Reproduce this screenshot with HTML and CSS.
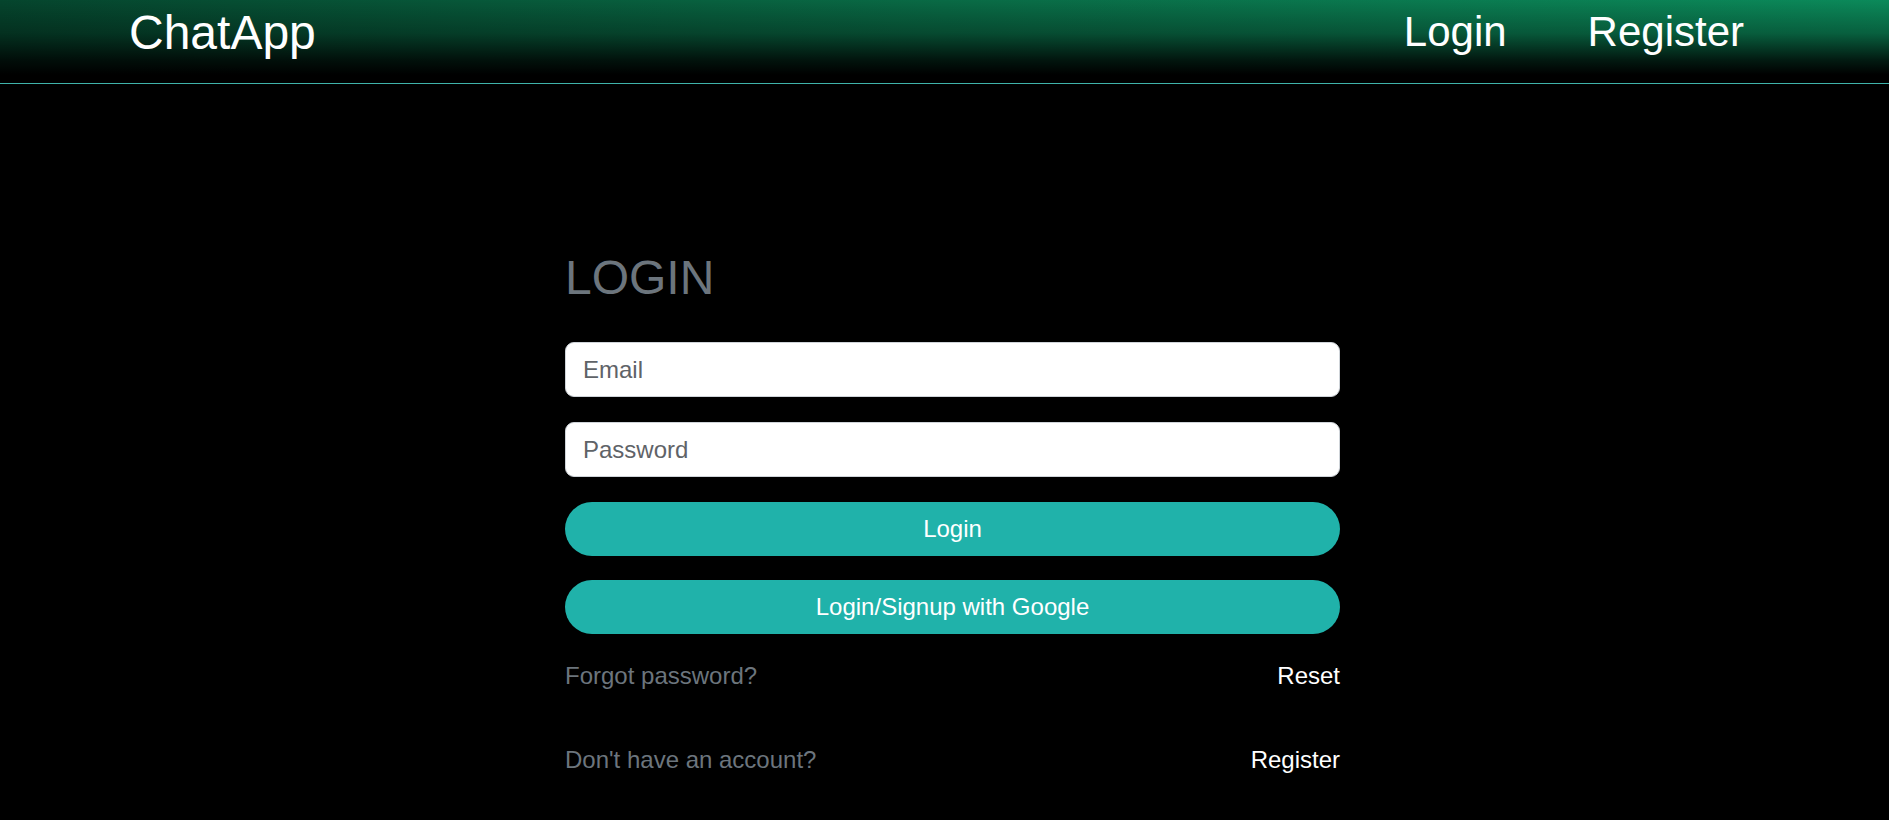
FILE: index.html
```html
<!DOCTYPE html>
<html lang="en">
<head>
<meta charset="utf-8">
<title>ChatApp</title>
<link rel="stylesheet" href="styles.css">
</head>
<body>
<header class="topbar">
  <a class="brand" href="#">ChatApp</a>
  <nav class="nav">
    <a class="nav-link" href="#">Login</a>
    <a class="nav-link" href="#">Register</a>
  </nav>
</header>
<main class="page">
  <section class="auth">
    <h1 class="auth-title">LOGIN</h1>
    <form class="auth-form">
      <input class="field" type="email" placeholder="Email">
      <input class="field" type="password" placeholder="Password">
      <button class="btn" type="button">Login</button>
      <button class="btn" type="button">Login/Signup with Google</button>
    </form>
    <div class="row row-first">
      <span class="muted">Forgot password?</span>
      <a class="link" href="#">Reset</a>
    </div>
    <div class="row row-second">
      <span class="muted">Don't have an account?</span>
      <a class="link" href="#">Register</a>
    </div>
  </section>
</main>
</body>
</html>
```

FILE: styles.css
```css
* { box-sizing: border-box; }

html, body {
  margin: 0;
  padding: 0;
  background: #000;
  font-family: "Liberation Sans", Arial, sans-serif;
  color: #fff;
}

.topbar {
  height: 84px;
  display: flex;
  align-items: flex-start;
  justify-content: space-between;
  padding: 9px 145px 0 129px;
  border-bottom: 1px solid #3fb3aa;
  background:
    linear-gradient(to bottom, rgba(0,0,0,0) 0%, rgba(0,0,0,0.3) 40%, rgba(0,0,0,0.8) 72%, #000 90%),
    linear-gradient(to right, #05452d 0%, #096a45 50%, #0b8a5a 100%);
}

.brand {
  font-size: 48px;
  line-height: 47px;
  color: #fff;
  text-decoration: none;
}

.nav {
  display: flex;
  gap: 81px;
}

.nav-link {
  font-size: 42px;
  line-height: 43px;
  color: #fff;
  text-decoration: none;
  padding-top: 1px;
}

.page {
  padding-top: 165px;
}

.auth {
  width: 775px;
  margin-left: 565px;
}

.auth-title {
  margin: 0 0 35px;
  font-weight: 400;
  font-size: 48px;
  line-height: 58px;
  color: #6c757d;
}

.auth-form {
  display: flex;
  flex-direction: column;
  gap: 24px;
}

.field {
  height: 55px;
  width: 100%;
  margin-bottom: 1px;
  padding: 0 17px;
  border: 1px solid #cfd4d9;
  border-radius: 9px;
  background: #fff;
  font-family: "Liberation Sans", Arial, sans-serif;
  font-size: 24px;
  color: #212529;
  outline: none;
}

.field::placeholder {
  color: #5f6368;
}

.btn {
  height: 54px;
  width: 100%;
  border: none;
  border-radius: 27px;
  background: #20b2aa;
  color: #fff;
  font-family: "Liberation Sans", Arial, sans-serif;
  font-size: 24px;
  cursor: pointer;
}

.row {
  display: flex;
  justify-content: space-between;
  font-size: 24px;
  line-height: 36px;
}

.row-first { margin-top: 24px; }
.row-second { margin-top: 48px; }

.muted { color: #6c757d; }

.link {
  color: #fff;
  text-decoration: none;
}
```
